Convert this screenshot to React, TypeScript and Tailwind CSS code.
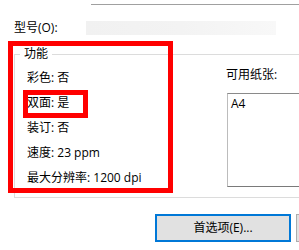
const FEATURES = ["彩色: 否", "双面: 是", "装订: 否", "速度: 23 ppm", "最大分辨率: 1200 dpi"]

export default function App() {
  return (
    <div className="relative w-[299px] h-[250px] overflow-hidden bg-white text-[12px] text-black font-['Open_Sans','Noto_Sans_CJK_SC',sans-serif]">
      {/* top edge of previous control */}
      <div className="mt-[4px] ml-[91px] h-px bg-[#a0a0a0]" />

      {/* model row */}
      <div className="mt-[16px] flex items-center h-[14px]">
        <span className="ml-[14px] w-[72px] shrink-0 leading-[14px]">型号(O):</span>
        <div className="w-[190px] shrink-0 h-[14px] bg-gradient-to-r from-[#f1f1f1] via-[#f3f3f3] to-[#f8f8f8]" />
      </div>

      {/* features group */}
      <fieldset className="mt-[11px] ml-[14px] w-[320px] border border-r-0 border-[#dcdcdc] pt-[3px] pb-[7px]">
        <legend className="ml-[5px] px-[4px] leading-[16px]">功能</legend>
        <div className="flex">
          <div className="w-[211px] shrink-0 pl-[12px] flex flex-col">
            {FEATURES.map(f => (
              <div key={f} className="h-[25px] leading-[25px] whitespace-nowrap">{f}</div>
            ))}
          </div>
          <div className="flex flex-col">
            <div className="mt-[2px] leading-[16px] whitespace-nowrap">可用纸张:</div>
            <div className="mt-[10px] ml-[1px] w-[100px] h-[94px] border border-r-0 border-t-[#8a8a8a] border-l-[#bcbcbc] border-b-[#7a7a7a] pl-[3px] pt-[2px] leading-[16px]">
              A4
            </div>
          </div>
        </div>
      </fieldset>

      {/* buttons */}
      <div className="mt-[16px] ml-[155px] flex gap-[5px]">
        <button className="w-[136px] h-[28px] shrink-0 border-2 border-[#0078d7] bg-[#e1e1e1] leading-[24px] text-center whitespace-nowrap">
          首选项(E)...
        </button>
        <button className="w-[80px] h-[28px] shrink-0 border border-[#adadad] bg-[#e1e1e1]" />
      </div>

      {/* red annotation boxes */}
      <div className="absolute left-[8px] top-[41px] w-[165px] h-[152px] border-[5px] border-[#ff0000]" />
      <div className="absolute left-[23px] top-[90px] w-[65px] h-[28px] border-[5px] border-[#ff0000]" />
    </div>
  )
}
